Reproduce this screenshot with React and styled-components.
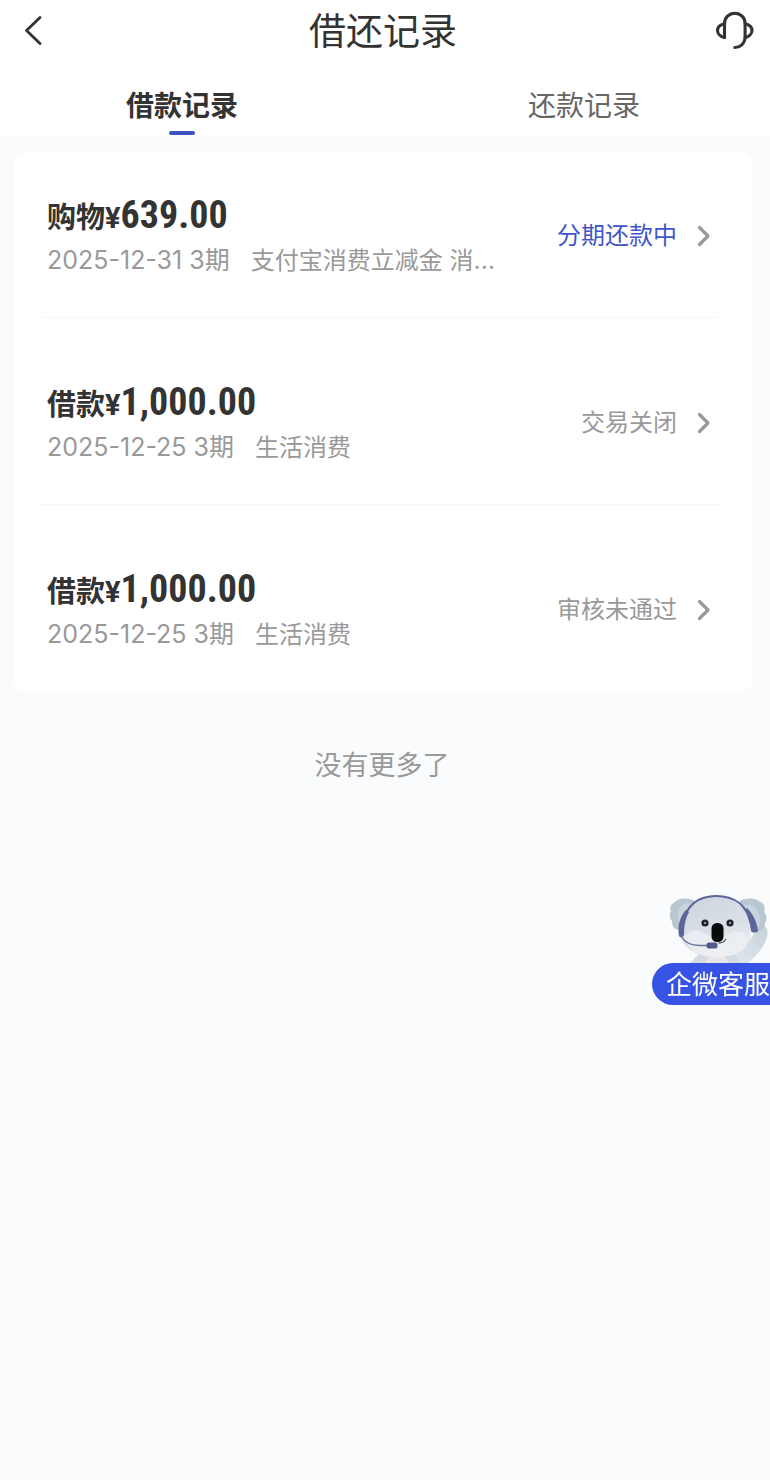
import React, { useState } from 'react';
import styled, { createGlobalStyle } from 'styled-components';

const GlobalStyle = createGlobalStyle`
  * {
    box-sizing: border-box;
  }
  body {
    margin: 0;
    background: #f9fbfd;
    font-family: Inter, "Noto Sans CJK SC", sans-serif;
    color: #333;
  }
  button {
    padding: 0;
    border: none;
    background: none;
    font-family: inherit;
    cursor: pointer;
  }
`;

const Page = styled.div`
  min-height: 100vh;
  overflow-x: hidden;
`;

const Top = styled.header`
  background: #fff;
`;

const NavBar = styled.div`
  display: flex;
  align-items: center;
  justify-content: space-between;
  height: 62px;
  padding: 0 16px 0 12px;
`;

const Title = styled.h1`
  margin: 0;
  padding-top: 2px;
  font-size: 37px;
  line-height: 52px;
  font-weight: 400;
`;

const IconButton = styled.button`
  display: flex;
  width: 40px;
  height: 40px;
  color: #333;
`;

const Tabs = styled.div`
  display: flex;
  justify-content: space-between;
  padding: 12px 130px 0 126px;
`;

const Tab = styled.button`
  display: flex;
  flex-direction: column;
  align-items: center;
  justify-content: space-between;
  height: 61px;
  padding-top: 11px;
  font-size: 28px;
  line-height: 42px;
  font-weight: ${props => (props.$active ? 700 : 400)};
  color: ${props => (props.$active ? '#333' : '#666')};

  &::after {
    content: '';
    width: 26px;
    height: 4px;
    border-radius: 2px;
    background: ${props => (props.$active ? '#3f51c1' : 'transparent')};
  }
`;

const Card = styled.ul`
  margin: 18px 18px 0 14px;
  padding: 0 34px 0 28px;
  list-style: none;
  background: #fff;
  border-radius: 10px;
`;

const Row = styled.li`
  border-bottom: 1px solid #f6f6f7;

  & + & {
    padding-top: 22px;
  }
  &:last-child {
    border-bottom: none;
  }
`;

const RowButton = styled.button`
  display: flex;
  align-items: center;
  justify-content: space-between;
  width: 100%;
  height: 164px;
  padding: 2px 7px 0 5px;
  text-align: left;
`;

const Info = styled.div`
  width: 452px;
  min-width: 0;
  padding-top: 2px;
`;

const Amount = styled.div`
  display: flex;
  align-items: baseline;
  font-size: 29px;
  line-height: 44px;
  font-weight: 700;
  color: #333;
`;

const Currency = styled.span`
  font-family: Roboto, sans-serif;
  font-size: 29px;
`;

const Digits = styled.span`
  font-family: "Roboto Condensed", "Liberation Sans Narrow", Roboto, sans-serif;
  font-size: 38px;
`;

const Detail = styled.div`
  overflow: hidden;
  font-size: 25px;
  line-height: 40px;
  color: #999;
  white-space: nowrap;
  text-overflow: ellipsis;
`;

const Purpose = styled.span`
  margin-left: 21px;
  font-size: 24px;
`;

const Status = styled.span`
  display: flex;
  align-items: center;
  gap: 18px;
  font-size: 24px;
  line-height: 36px;
  white-space: nowrap;
  color: ${props => (props.$active ? '#3f55c8' : '#999')};
`;

const NoMore = styled.p`
  margin: 55px 0 0;
  padding-right: 6px;
  text-align: center;
  font-size: 27px;
  line-height: 40px;
  color: #999;
`;

const Service = styled.button`
  position: fixed;
  top: 893px;
  right: 0;
  display: flex;
  flex-direction: column;
  align-items: flex-end;
`;

const ServiceLabel = styled.span`
  width: 118px;
  height: 42px;
  padding-left: 14px;
  overflow: hidden;
  border-radius: 21px 0 0 21px;
  background: #3653e4;
  color: #fff;
  font-size: 26px;
  line-height: 44px;
  text-align: left;
  white-space: nowrap;
`;

const BackIcon = () => (
  <svg width="40" height="40" viewBox="0 0 40 40" fill="none" stroke="currentColor" strokeWidth="2.8" strokeLinecap="round" strokeLinejoin="round" aria-hidden="true">
    <path d="M28 6.500 14.500 19.500l13.500 13" />
  </svg>
);

const HeadsetIcon = () => (
  <svg width="40" height="40" viewBox="0 0 40 40" fill="none" stroke="currentColor" strokeWidth="3.100" strokeLinecap="round" strokeLinejoin="round" aria-hidden="true">
    <path d="M10.500 26.500V12.500a10.300 10.300 0 0 1 20.600 0v14.500a10.300 10.300 0 0 1-10.300 9.500" />
    <path d="M10.500 12.800c-4 1-7 3.500-7 6.700s3 6.200 7 7" />
    <path d="M31.100 12.800c4 1 6.900 3.500 6.900 6.700s-2.900 6.200-6.900 7" />
  </svg>
);

const ChevronIcon = () => (
  <svg width="16" height="24" viewBox="0 0 16 24" fill="none" stroke="#999" strokeWidth="3.200" strokeLinecap="round" strokeLinejoin="round" aria-hidden="true">
    <path d="m4.500 3.500 8.500 8.500-8.500 8.500" />
  </svg>
);

const KoalaIcon = () => (
  <svg width="102" height="70" viewBox="0 0 102 70" fill="none" aria-hidden="true">
    <defs>
      <linearGradient id="head" x1="30" y1="4" x2="55" y2="66" gradientUnits="userSpaceOnUse">
        <stop stopColor="#cfd6df" />
        <stop offset="0.6" stopColor="#dbe0e7" />
        <stop offset="1" stopColor="#eaedf1" />
      </linearGradient>
      <linearGradient id="arm" x1="70" y1="60" x2="100" y2="30" gradientUnits="userSpaceOnUse">
        <stop stopColor="#dce3e9" />
        <stop offset="1" stopColor="#c5d0da" />
      </linearGradient>
    </defs>
    <path d="M92 31c6 0 9 6 7 13-3 10-10 18-19 26H58l8-10c12-7 20-17 26-29z" fill="url(#arm)" />
    <path d="M34 58 22 70h50l-8-12z" fill="#d3dbe3" />
    <path d="M42 63 36 70h26l-6-7z" fill="#e9e7e6" />
    <path d="M28 9C21 4 10 5 7 9c-4 2-6 6-4 9-2 4-1 8 1 10 0 6 3 9 8 9l9-9z" fill="#b9c7d0" />
    <path d="M26 11c-8-2-14 1-15 6-2 6-1 13 3 16l9-9z" fill="#c9d4dc" />
    <path d="M71 9c6-5 18-4 21 0 4 1 6 6 4 10 3 3 3 8 1 11 0 4-3 7-7 8L77 25z" fill="#b8c6d0" />
    <path d="M75 12c7-2 14 2 15 7 3 5 3 10 1 15l-9-7z" fill="#c8d4dc" />
    <path d="M48 3c19 0 29 12 33 26 3 11 2 20-5 27-7 6-16 8-28 8-14 0-25-4-31-12-6-8-5-18-2-26C20 12 31 3 48 3z" fill="url(#head)" />
    <path d="M16 44c5-9 17-8 25-1h16c9-7 19-6 23 1-1 13-13 20-33 20-15 0-28-7-31-20z" fill="#eff1f4" opacity=".7" />
    <path d="M15 30C18 12 31 3 48 3c19 0 31 10 35 27" stroke="#5a6499" strokeWidth="2.200" />
    <path d="M18 17c-5 5-9 15-7 26 1 2 4 2 5-1 0-8 1-16 5-23z" fill="#5b6598" />
    <path d="M79 15c6 6 10 14 11 23-1 2-6 2-7 0-1-8-3-15-6-21z" fill="#5b6598" />
    <path d="M13 43c4 7 11 10 21 9.500h5" stroke="#6b759f" strokeWidth="1.500" />
    <rect x="38.500" y="49.500" width="11" height="6" rx="2.500" fill="#515b8b" />
    <circle cx="37" cy="30" r="3.600" fill="#20252b" />
    <circle cx="62" cy="30" r="3.600" fill="#20252b" />
    <circle cx="37" cy="30" r="1" fill="#b9bec5" />
    <circle cx="62" cy="30" r="1" fill="#b9bec5" />
    <rect x="43.500" y="30" width="12" height="19" rx="5.500" fill="#090a0c" />
    <path d="M51 50c3 0 5-1 6.500-3.500" stroke="#464b55" strokeWidth="1.300" strokeLinecap="round" />
  </svg>
);

const tabs = ['借款记录', '还款记录'];

const records = [
  { id: 1, type: '购物', amount: '639.00', date: '2025-12-31', periods: 3, purpose: '支付宝消费立减金 消费立减', status: '分期还款中', active: true },
  { id: 2, type: '借款', amount: '1,000.00', date: '2025-12-25', periods: 3, purpose: '生活消费', status: '交易关闭' },
  { id: 3, type: '借款', amount: '1,000.00', date: '2025-12-25', periods: 3, purpose: '生活消费', status: '审核未通过' },
];

const App = () => {
  const [currentTab, setCurrentTab] = useState(0);

  return (
    <>
      <GlobalStyle />
      <Page>
        <Top>
          <NavBar>
            <IconButton aria-label="返回"><BackIcon /></IconButton>
            <Title>借还记录</Title>
            <IconButton aria-label="客服"><HeadsetIcon /></IconButton>
          </NavBar>
          <Tabs role="tablist">
            {tabs.map((tab, index) => (
              <Tab
                key={tab}
                role="tab"
                aria-selected={currentTab === index}
                $active={currentTab === index}
                onClick={() => setCurrentTab(index)}
              >
                {tab}
              </Tab>
            ))}
          </Tabs>
        </Top>
        <main>
          <Card>
            {records.map(record => (
              <Row key={record.id}>
                <RowButton>
                  <Info>
                    <Amount>
                      {record.type}
                      <Currency>¥</Currency>
                      <Digits>{record.amount}</Digits>
                    </Amount>
                    <Detail>
                      {`${record.date} ${record.periods}期`}
                      <Purpose>{record.purpose}</Purpose>
                    </Detail>
                  </Info>
                  <Status $active={record.active}>
                    {record.status}
                    <ChevronIcon />
                  </Status>
                </RowButton>
              </Row>
            ))}
          </Card>
          <NoMore>没有更多了</NoMore>
        </main>
        <Service>
          <KoalaIcon />
          <ServiceLabel>企微客服</ServiceLabel>
        </Service>
      </Page>
    </>
  );
};

export default App;
